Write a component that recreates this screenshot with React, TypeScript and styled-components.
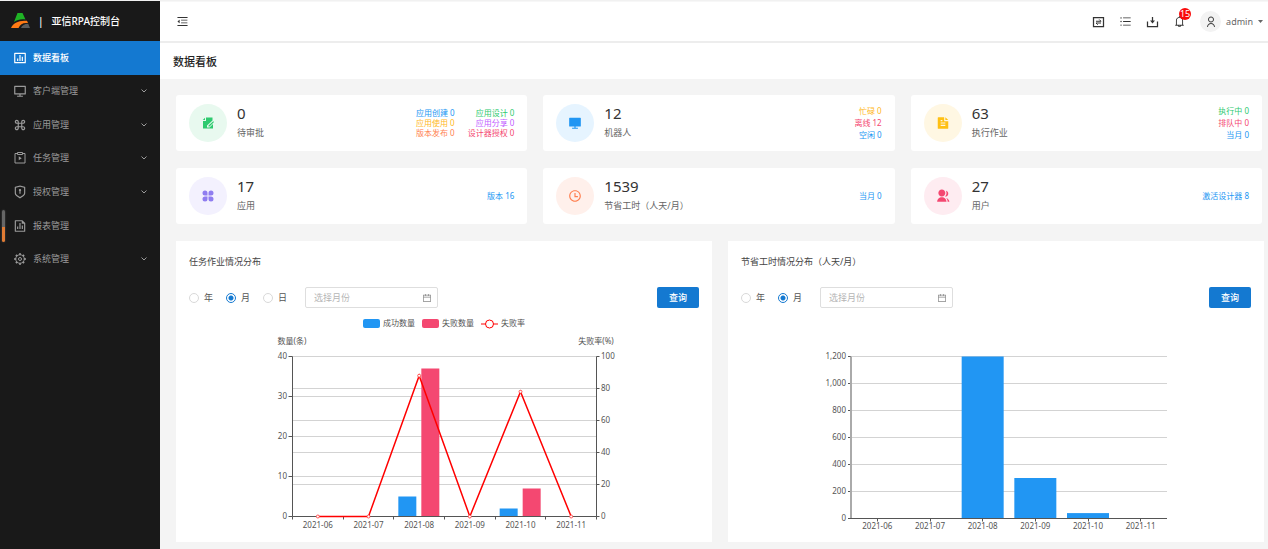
import React, { useState } from "react";
import styled, { createGlobalStyle } from "styled-components";
import {
  RiBarChartBoxLine,
  RiComputerLine,
  RiCommandLine,
  RiShieldKeyholeLine,
  RiFileChartLine,
  RiComputerFill,
  RiFileTextFill,
  RiTimeLine,
  RiGroupFill,
  RiUserLine,
} from "react-icons/ri";
import {
  AiOutlineMenuFold,
  AiOutlineUnorderedList,
  AiOutlineBell,
  AiOutlineCalendar,
} from "react-icons/ai";

const color = {
  primary: "#1479d1",
  blue: "#2196f3",
  green: "#2eca6f",
  yellow: "#ffb81c",
  orange: "#ff7f50",
  purple: "#c15cff",
  red: "#f44871",
  text: "#333",
  muted: "#666",
  axis: "#555",
  grid: "#d3d3d3",
};

const GlobalStyle = createGlobalStyle`
  *, *::before, *::after { box-sizing: border-box; }
  body {
    margin: 0;
    background: #f4f4f4;
    color: ${color.text};
    font-family: "Noto Sans", "Noto Sans CJK SC", sans-serif;
    font-size: 9px;
    line-height: 12px;
  }
  button, input { font: inherit; color: inherit; }
`;

/* ---------- shell ---------- */

const Shell = styled.div`
  display: flex;
  min-height: 100vh;
  border-top: 1px solid #f1f1f1;
`;

const Sidebar = styled.aside`
  position: relative;
  flex: 0 0 160px;
  background: #191919;
  color: #9b9b9b;
`;

const Brand = styled.div`
  display: flex;
  align-items: center;
  height: 40px;
  padding-left: 11px;
  color: #fff;
  font-size: 10px;
  font-weight: 500;
`;

const Divider = styled.span`
  margin: 0 8px 0 7px;
`;

const Menu = styled.ul`
  display: grid;
  grid-template-rows: repeat(7, 1fr);
  height: 235px;
  margin: 0;
  padding: 0;
  list-style: none;
`;

const MenuLink = styled.a<{ $active?: boolean }>`
  display: flex;
  align-items: center;
  gap: 6px;
  height: 100%;
  padding: 0 12px 0 13px;
  background: ${(p) => (p.$active ? color.primary : "transparent")};
  color: ${(p) => (p.$active ? "#fff" : "inherit")};
  font-weight: ${(p) => (p.$active ? 500 : 400)};
  text-decoration: none;

  span { flex: 1; }
`;

const EdgeHandle = styled.div`
  position: absolute;
  left: 2px;
  top: 209px;
  width: 3px;
  height: 32px;
  border-radius: 2px;
  background: linear-gradient(#666 0 53%, #e07b34 53% 100%);
  box-shadow: 0 0 2px #555;
`;

const Main = styled.main`
  flex: 1;
  min-width: 0;
`;

const TopBar = styled.header`
  display: flex;
  align-items: center;
  justify-content: space-between;
  height: 42px;
  padding: 0 5px 0 16px;
  border-top: 1px solid #f7f7f7;
  border-bottom: 2px solid #ededed;
  background: #fff;
  color: #333;
`;

const Tools = styled.div`
  display: flex;
  align-items: center;
  gap: 14px;
`;

const IconButton = styled.button`
  position: relative;
  display: flex;
  padding: 0;
  border: 0;
  background: none;
  cursor: pointer;
`;

const Badge = styled.span`
  position: absolute;
  left: 6px;
  top: -7px;
  width: 12px;
  height: 12px;
  border-radius: 50%;
  background: #f90b0b;
  color: #fff;
  font-size: 9px;
  line-height: 12px;
  text-align: center;
`;

const Account = styled.button`
  display: flex;
  align-items: center;
  gap: 5px;
  padding: 0;
  border: 0;
  background: none;
  color: ${color.muted};
  cursor: pointer;
`;

const Avatar = styled.span`
  display: grid;
  place-items: center;
  width: 21px;
  height: 21px;
  border-radius: 50%;
  background: #f3f3f3;
  color: #444;
`;

const PageTitle = styled.h1`
  margin: 0;
  padding: 11px 13px 9px;
  background: #fff;
  color: #222;
  font-size: 11px;
  font-weight: 500;
  line-height: 16px;
`;

/* ---------- statistic cards ---------- */

const CardGrid = styled.section`
  display: grid;
  grid-template-columns: repeat(3, 1fr);
  gap: 17px 16px;
  padding: 16px 6px 0 16px;
`;

const Card = styled.article`
  display: flex;
  align-items: center;
  height: 56px;
  padding: 0 13px;
  border-radius: 3px;
  background: #fff;
`;

const CardIcon = styled.div<{ $fg: string; $bg: string }>`
  display: grid;
  place-items: center;
  width: 38px;
  height: 38px;
  border-radius: 50%;
  background: ${(p) => p.$bg};
  color: ${(p) => p.$fg};
`;

const CardText = styled.div`
  flex: 1;
  margin-left: 10px;
  padding-bottom: 3px;
`;

const Value = styled.div`
  font-size: 15px;
  line-height: 22px;
`;

const Label = styled.div`
  color: ${color.muted};
  line-height: 18px;
`;

const Details = styled.div<{ $columns: number }>`
  display: grid;
  grid-template-columns: repeat(${(p) => p.$columns}, auto);
  column-gap: 13px;
  font-size: 8px;
  line-height: ${(p) => (p.$columns > 1 ? 10 : 12)}px;
  text-align: right;
`;

const Detail = styled.span<{ $tone: string }>`
  color: ${(p) => p.$tone};
`;

/* ---------- chart panels ---------- */

const PanelGrid = styled.section`
  display: grid;
  grid-template-columns: repeat(2, 1fr);
  gap: 16px;
  padding: 17px 4px 7px 16px;
`;

const Panel = styled.article`
  background: #fff;
`;

const PanelTitle = styled.h2`
  margin: 0;
  padding: 13px 13px 17px;
  color: #444;
  font-size: 9px;
  font-weight: 400;
  line-height: 16px;
`;

const Filters = styled.form`
  display: flex;
  align-items: center;
  padding: 0 13px;
`;

const RadioGroup = styled.div`
  display: flex;
  gap: 13px;
  margin-right: 18px;
`;

const RadioLabel = styled.label`
  display: flex;
  align-items: center;
  gap: 5px;
  color: #555;
`;

const Radio = styled.input`
  appearance: none;
  width: 10px;
  height: 10px;
  margin: 0;
  border: 1px solid #d9d9d9;
  border-radius: 50%;
  background: #fff;

  &:checked {
    border-color: ${color.primary};
    background: radial-gradient(circle, ${color.primary} 0 2px, #fff 3px);
  }
`;

const MonthField = styled.label`
  display: flex;
  align-items: center;
  width: 133px;
  height: 21px;
  padding: 0 5px 0 8px;
  border: 1px solid #dedede;
  border-radius: 2px;
  color: #888;
`;

const MonthInput = styled.input`
  flex: 1;
  min-width: 0;
  padding: 0;
  border: 0;
  outline: 0;
  background: none;

  &::placeholder { color: #b5b5b5; }
`;

const QueryButton = styled.button`
  width: 42px;
  height: 21px;
  margin-left: auto;
  padding: 0;
  border: 0;
  border-radius: 2px;
  background: ${color.primary};
  color: #fff;
  font-weight: 500;
  cursor: pointer;
`;

const Chart = styled.svg`
  display: block;
  width: 100%;
  height: auto;
  font-size: 8px;
  fill: ${color.axis};
`;

/* ---------- drawn icons ---------- */

const Logo = () => (
  <svg width="20" height="16" viewBox="0 0 20 16" aria-hidden="true">
    <path d="M6.500 0h5l3 6.500c-4-.8-8 0-11.500 2.500z" fill="#1fb325" />
    <path d="M0 15c2-5 8-8 16-7.200L17 10c-5-.6-7.500 1-9.500 5z" fill="#ff7a14" />
    <path d="M10 15c1-2.500 3.500-4.200 7.200-4.200L19 15z" fill="#5c5c5c" />
  </svg>
);

const TaskIcon = () => (
  <svg width="14" height="14" viewBox="0 0 28 28" fill="none" stroke="currentColor" strokeWidth="2" aria-hidden="true">
    <path d="M9 5H4v19h20V5h-5" />
    <path d="M9 3v4h10V3z" />
    <path d="M11.500 10.500v8l6-4z" fill="currentColor" stroke="none" />
  </svg>
);

const GearIcon = () => (
  <svg width="14" height="14" viewBox="0 0 28 28" fill="none" stroke="currentColor" aria-hidden="true">
    <circle cx="14" cy="14" r="8.500" strokeWidth="2" />
    <circle cx="14" cy="14" r="3" strokeWidth="2" />
    <path
      d="M14 2.500v3M14 22.500v3M2.500 14h3M22.500 14h3M5.900 5.900 8 8M20 20l2.100 2.100M5.900 22.100 8 20M20 8l2.100-2.100"
      strokeWidth="4"
    />
  </svg>
);

const ChevronIcon = () => (
  <svg width="8" height="8" viewBox="0 0 8 8" fill="none" stroke="currentColor" aria-hidden="true">
    <path d="M1.500 2.500 4 5l2.500-2.500" />
  </svg>
);

const SwapBoxIcon = () => (
  <svg width="13" height="12" viewBox="0 0 26 24" fill="none" stroke="currentColor" strokeWidth="2.500" aria-hidden="true">
    <path d="M3 3h20v18H3z" />
    <path d="M8 10.500h10l-3.500-3.500M18 14H8l3.500 3.500" strokeWidth="2" />
  </svg>
);

const DownloadIcon = () => (
  <svg width="13" height="12" viewBox="0 0 26 24" fill="none" stroke="currentColor" strokeWidth="2.500" aria-hidden="true">
    <path d="M3 11v10h20V11M13 2v9" />
    <path d="M8 9h10l-5 6z" fill="currentColor" stroke="none" />
  </svg>
);

const CaretIcon = () => (
  <svg width="5" height="3" viewBox="0 0 5 3" fill="currentColor" aria-hidden="true">
    <path d="M0 0h5L2.500 3z" />
  </svg>
);

const ApprovalIcon = () => (
  <svg width="12" height="12" viewBox="0 0 24 24" fill="currentColor" aria-hidden="true">
    <path d="M8 1h13v6L10 17v4h5l7-7v9H2V8h6z" />
    <path d="M6 1.500V6H1.500zM22.500 8.500l1.500 1.500-9 9h-2v-2z" />
  </svg>
);

const AppsIcon = () => (
  <svg width="12" height="12" viewBox="0 0 24 24" fill="currentColor" aria-hidden="true">
    <path d="M6 1a5 5 0 0 1 5 5v5H6A5 5 0 0 1 6 1zM18 1a5 5 0 0 1 0 10h-5V6a5 5 0 0 1 5-5zM6 13h5v5a5 5 0 1 1-5-5zM13 13h5a5 5 0 1 1-5 5z" />
  </svg>
);

/* ---------- data ---------- */

const menuItems = [
  { text: "数据看板", icon: <RiBarChartBoxLine size={14} />, active: true },
  { text: "客户端管理", icon: <RiComputerLine size={14} />, nested: true },
  { text: "应用管理", icon: <RiCommandLine size={14} />, nested: true },
  { text: "任务管理", icon: <TaskIcon />, nested: true },
  { text: "授权管理", icon: <RiShieldKeyholeLine size={14} />, nested: true },
  { text: "报表管理", icon: <RiFileChartLine size={14} /> },
  { text: "系统管理", icon: <GearIcon />, nested: true },
];

type Stat = {
  value: string;
  label: string;
  icon: React.ReactNode;
  fg: string;
  bg: string;
  columns?: number;
  details: [string, string][];
};

const stats: Stat[] = [
  {
    value: "0",
    label: "待审批",
    icon: <ApprovalIcon />,
    fg: color.green,
    bg: "#e8f9ef",
    columns: 2,
    details: [
      ["应用创建 0", color.blue],
      ["应用设计 0", color.green],
      ["应用使用 0", color.yellow],
      ["应用分享 0", color.purple],
      ["版本发布 0", color.orange],
      ["设计器授权 0", color.red],
    ],
  },
  {
    value: "12",
    label: "机器人",
    icon: <RiComputerFill size={14} />,
    fg: color.blue,
    bg: "#e6f4ff",
    details: [
      ["忙碌 0", color.yellow],
      ["离线 12", color.red],
      ["空闲 0", color.blue],
    ],
  },
  {
    value: "63",
    label: "执行作业",
    icon: <RiFileTextFill size={14} />,
    fg: "#ffc014",
    bg: "#fff7e3",
    details: [
      ["执行中 0", color.green],
      ["排队中 0", color.red],
      ["当月 0", color.blue],
    ],
  },
  {
    value: "17",
    label: "应用",
    icon: <AppsIcon />,
    fg: "#8f7df0",
    bg: "#f3f1fe",
    details: [["版本 16", color.blue]],
  },
  {
    value: "1539",
    label: "节省工时（人天/月）",
    icon: <RiTimeLine size={14} />,
    fg: color.orange,
    bg: "#fff0eb",
    details: [["当月 0", color.blue]],
  },
  {
    value: "27",
    label: "用户",
    icon: <RiGroupFill size={14} />,
    fg: color.red,
    bg: "#feecf1",
    details: [["激活设计器 8", color.blue]],
  },
];

const months = ["2021-06", "2021-07", "2021-08", "2021-09", "2021-10", "2021-11"];

/* ---------- charts ---------- */

function JobChart() {
  const left = 116.5;
  const right = 420.5;
  const top = 48.5;
  const bottom = 208.5;
  const step = (right - left) / months.length;
  const success = [0, 0, 5, 0, 2, 0];
  const failed = [0, 0, 37, 0, 7, 0];
  const rate = [0, 0, 88, 0, 78, 0];
  const countY = (v: number) => bottom - v * 4;
  const rateY = (v: number) => bottom - v * 1.6;
  const midX = (i: number) => left + step * (i + 0.5);

  return (
    <Chart viewBox="0 0 536 234" role="img" aria-label="任务作业情况分布">
      <rect x="187" y="11" width="17" height="9" rx="2" fill={color.blue} />
      <text x="207" y="18">成功数量</text>
      <rect x="246" y="11" width="17" height="9" rx="2" fill={color.red} />
      <text x="266" y="18">失败数量</text>
      <path d="M305 16h17" stroke="red" />
      <circle cx="313.500" cy="16" r="4" fill="#fff" stroke="red" />
      <text x="325" y="18">失败率</text>

      <text x="116" y="36" textAnchor="middle">数量(条)</text>
      <text x="420" y="36" textAnchor="middle">失败率(%)</text>

      {[10, 20, 30, 40].map((v) => (
        <path key={v} d={`M${left} ${countY(v)}H${right}`} stroke={color.grid} />
      ))}
      {[20, 40, 60, 80].map((v) => (
        <path key={v} d={`M${left} ${Math.floor(rateY(v)) + 0.5}H${right}`} stroke={color.grid} />
      ))}

      {months.map((m, i) => (
        <g key={m}>
          <rect x={left + step * i + 4.5} y={countY(success[i])} width="18" height={success[i] * 4} fill={color.blue} />
          <rect x={left + step * i + 27.5} y={countY(failed[i])} width="18" height={failed[i] * 4} fill={color.red} />
          <text x={midX(i)} y="220" textAnchor="middle">{m}</text>
        </g>
      ))}

      <path d={`M${left} ${top}V${bottom}H${right}V${top}`} fill="none" stroke={color.axis} />
      {[0, 1, 2, 3, 4, 5, 6].map((i) => (
        <path key={i} d={`M${Math.floor(left + step * i) + 0.5} ${bottom}v3`} stroke={color.axis} />
      ))}
      {[0, 10, 20, 30, 40].map((v) => (
        <g key={v}>
          <path d={`M${left} ${countY(v)}h-4`} stroke={color.axis} />
          <text x="111" y={countY(v) + 2} textAnchor="end">{v}</text>
        </g>
      ))}
      {[0, 20, 40, 60, 80, 100].map((v) => (
        <g key={v}>
          <path d={`M${right} ${rateY(v)}h3`} stroke={color.axis} />
          <text x="425" y={rateY(v) + 2}>{v}</text>
        </g>
      ))}

      <polyline
        points={rate.map((v, i) => `${midX(i)},${rateY(v)}`).join(" ")}
        fill="none"
        stroke="red"
        strokeWidth="1.500"
      />
      {rate.map((v, i) => (
        <circle key={i} cx={midX(i)} cy={rateY(v)} r="1.500" fill="#fff" stroke="#f33" strokeWidth="0.800" />
      ))}
    </Chart>
  );
}

function HoursChart() {
  const left = 123;
  const right = 439;
  const top = 48.5;
  const bottom = 210.5;
  const step = (right - left) / months.length;
  const hours = [0, 0, 1200, 300, 40, 0];
  const y = (v: number) => bottom - (v * (bottom - top)) / 1200;
  const midX = (i: number) => left + step * (i + 0.5);

  return (
    <Chart viewBox="0 0 536 234" role="img" aria-label="节省工时情况分布">
      {[0, 200, 400, 600, 800, 1000, 1200].map((v) => (
        <g key={v}>
          {v > 0 && <path d={`M${left} ${y(v)}H${right}`} stroke={color.grid} />}
          <path d={`M${left} ${y(v)}h-3`} stroke={color.axis} />
          <text x="118" y={y(v) + 2} textAnchor="end">{v.toLocaleString("en-US")}</text>
        </g>
      ))}
      <path d={`M${left} ${top}V${bottom}`} stroke="#aaa" strokeWidth="2" />
      {months.map((m, i) => (
        <g key={m}>
          <rect x={midX(i) - 21} y={y(hours[i])} width="42" height={bottom - y(hours[i])} fill={color.blue} />
          <path d={`M${Math.floor(midX(i)) + 0.5} ${bottom}v3`} stroke={color.axis} />
          <text x={midX(i)} y="221" textAnchor="middle">{m}</text>
        </g>
      ))}
      <path d={`M${left - 1} ${bottom}H${right}`} stroke={color.axis} />
    </Chart>
  );
}

function ChartPanel({ title, name, units, children }: {
  title: string;
  name: string;
  units: string[];
  children: React.ReactNode;
}) {
  const [unit, setUnit] = useState("月");
  return (
    <Panel>
      <PanelTitle>{title}</PanelTitle>
      <Filters onSubmit={(e) => e.preventDefault()}>
        <RadioGroup role="radiogroup" aria-label={title}>
          {units.map((u) => (
            <RadioLabel key={u}>
              <Radio type="radio" name={name} value={u} checked={unit === u} onChange={() => setUnit(u)} />
              {u}
            </RadioLabel>
          ))}
        </RadioGroup>
        <MonthField>
          <MonthInput type="text" placeholder="选择月份" aria-label="选择月份" />
          <AiOutlineCalendar size={10} />
        </MonthField>
        <QueryButton type="submit">查询</QueryButton>
      </Filters>
      {children}
    </Panel>
  );
}

export default function App() {
  return (
    <>
      <GlobalStyle />
      <Shell>
        <Sidebar>
          <Brand>
            <Logo />
            <Divider>|</Divider>
            <span>亚信RPA控制台</span>
          </Brand>
          <nav>
            <Menu>
              {menuItems.map((item) => (
                <li key={item.text}>
                  <MenuLink href="#" $active={item.active}>
                    {item.icon}
                    <span>{item.text}</span>
                    {item.nested && <ChevronIcon />}
                  </MenuLink>
                </li>
              ))}
            </Menu>
          </nav>
          <EdgeHandle />
        </Sidebar>

        <Main>
          <TopBar>
            <IconButton aria-label="收起菜单"><AiOutlineMenuFold size={13} /></IconButton>
            <Tools>
              <IconButton aria-label="切换"><SwapBoxIcon /></IconButton>
              <IconButton aria-label="列表"><AiOutlineUnorderedList size={13} /></IconButton>
              <IconButton aria-label="下载"><DownloadIcon /></IconButton>
              <IconButton aria-label="通知">
                <AiOutlineBell size={13} />
                <Badge>15</Badge>
              </IconButton>
              <Account>
                <Avatar><RiUserLine size={12} /></Avatar>
                <span>admin</span>
                <CaretIcon />
              </Account>
            </Tools>
          </TopBar>
          <PageTitle>数据看板</PageTitle>

          <CardGrid>
            {stats.map((s) => (
              <Card key={s.label}>
                <CardIcon $fg={s.fg} $bg={s.bg}>{s.icon}</CardIcon>
                <CardText>
                  <Value>{s.value}</Value>
                  <Label>{s.label}</Label>
                </CardText>
                <Details $columns={s.columns ?? 1}>
                  {s.details.map(([text, tone]) => (
                    <Detail key={text} $tone={tone}>{text}</Detail>
                  ))}
                </Details>
              </Card>
            ))}
          </CardGrid>

          <PanelGrid>
            <ChartPanel title="任务作业情况分布" name="job-unit" units={["年", "月", "日"]}>
              <JobChart />
            </ChartPanel>
            <ChartPanel title="节省工时情况分布（人天/月）" name="hours-unit" units={["年", "月"]}>
              <HoursChart />
            </ChartPanel>
          </PanelGrid>
        </Main>
      </Shell>
    </>
  );
}
